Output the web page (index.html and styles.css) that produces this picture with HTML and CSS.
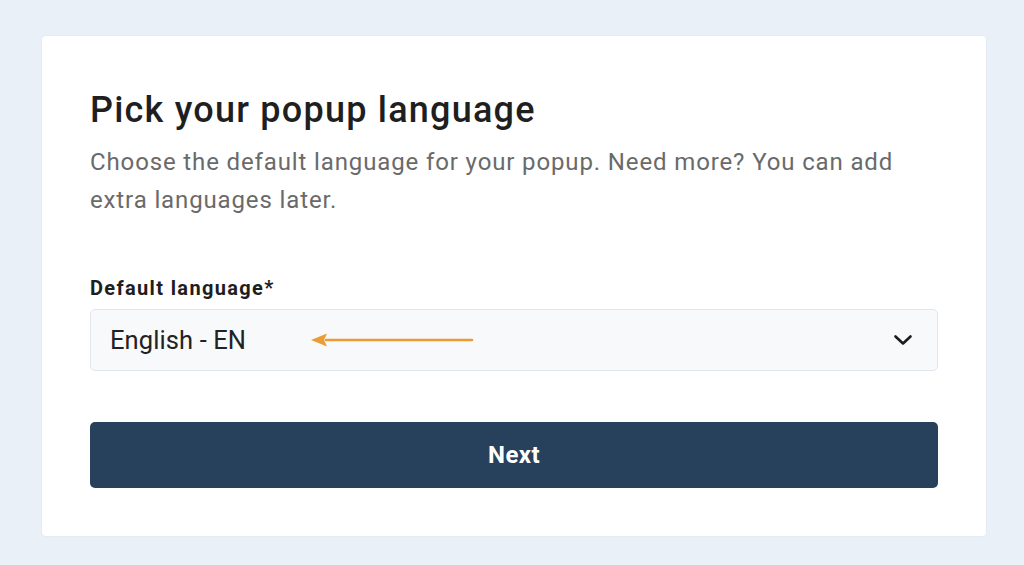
FILE: index.html
```html
<!DOCTYPE html>
<html lang="en">
<head>
<meta charset="utf-8">
<title>Pick your popup language</title>
<link rel="stylesheet" href="styles.css">
</head>
<body>
<main class="card">
  <h1 class="title">Pick your popup language</h1>
  <p class="subtitle">Choose the default language for your popup. Need more? You can add extra languages later.</p>
  <div class="field">
    <label class="label">Default language*</label>
    <div class="select">
      <span class="select-value">English - EN</span>
      <svg class="pointer" width="164" height="16" viewBox="0 0 164 16" aria-hidden="true">
        <path d="M16 8 H162" stroke="#eb9c35" stroke-width="2.6" stroke-linecap="round"/>
        <path d="M1 8 L17 1.5 L14 8 L17 14.5 Z" fill="#eb9c35"/>
      </svg>
      <svg class="chevron" width="20" height="12" viewBox="0 0 20 12" aria-hidden="true">
        <path d="M2.5 2.5 L10 9.5 L17.5 2.5" fill="none" stroke="#1c1c1c" stroke-width="2.6" stroke-linecap="round" stroke-linejoin="round"/>
      </svg>
    </div>
  </div>
  <button class="btn" type="button">Next</button>
</main>
</body>
</html>
```
FILE: styles.css
```css
html, body {
  margin: 0;
  padding: 0;
}
body {
  background: #e9f0f8;
  font-family: Roboto, "Liberation Sans", Arial, sans-serif;
  height: 565px;
  overflow: hidden;
}
.card {
  box-sizing: border-box;
  margin: 36px 38px 0 42px;
  width: 944px;
  height: 500px;
  background: #ffffff;
  border-radius: 4px;
  padding: 52px 48px 0 48px;
  box-shadow: 0 0 0 1px #e4ebf2;
}
.title {
  margin: 0;
  font-size: 36px;
  line-height: 44px;
  font-weight: 500;
  color: #1f1f1f;
  letter-spacing: 1.22px;
}
.subtitle {
  margin: 11px 0 0 0;
  font-size: 24px;
  line-height: 38px;
  color: #6a6a6a;
  letter-spacing: 0.87px;
}
.field {
  margin-top: 57px;
}
.label {
  display: block;
  font-size: 20px;
  line-height: 24px;
  font-weight: 700;
  color: #1e1e1e;
  letter-spacing: 1.35px;
}
.select {
  position: relative;
  margin-top: 9px;
  height: 62px;
  box-sizing: border-box;
  background: #f7f9fb;
  border: 1px solid #e2e7ee;
  border-radius: 5px;
  display: flex;
  align-items: center;
  padding: 0 24px 0 19px;
}
.select-value {
  font-size: 25.5px;
  color: #222222;
  flex: 1;
  letter-spacing: 0.1px;
}
.pointer {
  position: absolute;
  left: 219px;
  top: 22px;
}
.chevron {
  display: block;
}
.btn {
  display: block;
  width: 100%;
  margin-top: 51px;
  height: 66px;
  border: none;
  border-radius: 5px;
  background: #27415d;
  color: #ffffff;
  font-family: Roboto, "Liberation Sans", Arial, sans-serif;
  font-size: 24px;
  font-weight: 700;
  letter-spacing: 0.4px;
}
```
